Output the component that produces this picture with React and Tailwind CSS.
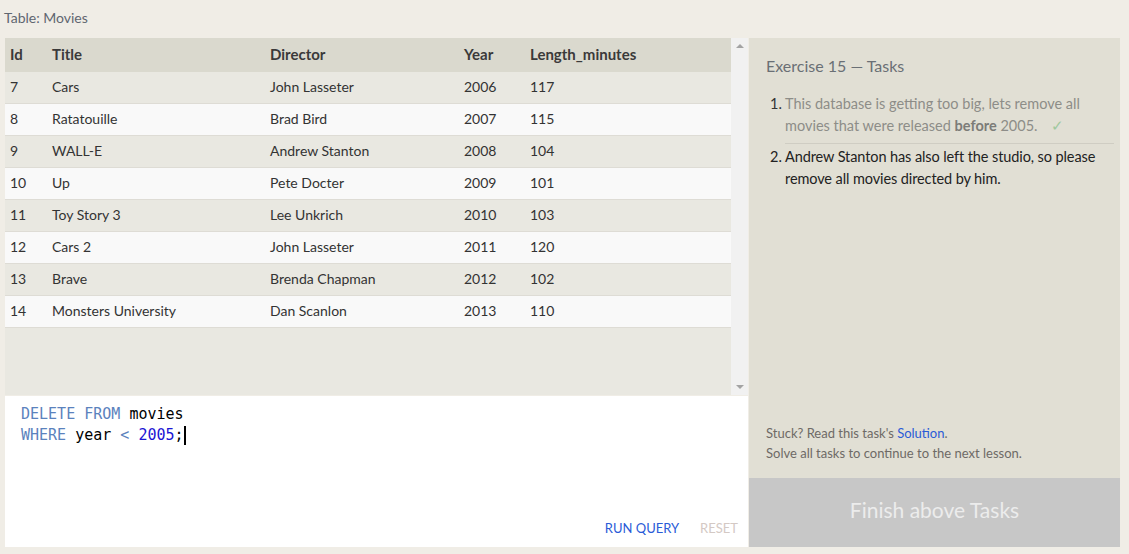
const movies = [
  [7, "Cars", "John Lasseter", 2006, 117],
  [8, "Ratatouille", "Brad Bird", 2007, 115],
  [9, "WALL-E", "Andrew Stanton", 2008, 104],
  [10, "Up", "Pete Docter", 2009, 101],
  [11, "Toy Story 3", "Lee Unkrich", 2010, 103],
  [12, "Cars 2", "John Lasseter", 2011, 120],
  [13, "Brave", "Brenda Chapman", 2012, 102],
  [14, "Monsters University", "Dan Scanlon", 2013, 110],
];

const cols = "grid grid-cols-[42px_218px_194px_66px_1fr]";

export default function App() {
  return (
    <div
      className="h-[554px] w-[1129px] bg-[#f0ede6] text-[#333] overflow-hidden"
      style={{ fontFamily: "Lato, 'Open Sans', sans-serif" }}
    >
      <div className="h-[38px] px-[4px] pt-[7px] text-[14px] text-[#5f6670]">
        Table: Movies
      </div>
      <div className="flex ml-[5px] w-[1115px] h-[509px]">
        <div className="w-[743px] flex flex-col">
          <div className="h-[357px] flex bg-[#e9e8e1]">
            <div className="flex-1 text-[14px]">
              <div className={cols + " h-[34px] items-center bg-[#dad9ce] font-bold text-[15px] text-[#3a3a3a] pl-[5px] pb-[2px]"}>
                <div>Id</div>
                <div>Title</div>
                <div>Director</div>
                <div>Year</div>
                <div>Length_minutes</div>
              </div>
              {movies.map((m, i) => (
                <div
                  key={m[0]}
                  className={
                    cols +
                    " h-[32px] items-center pl-[5px] pb-[2px] border-b border-[#dedcd5] " +
                    (i % 2 === 0 ? "bg-[#e9e8e1]" : "bg-[#f9f9f9]")
                  }
                >
                  {m.map((v, j) => (
                    <div key={j}>{v}</div>
                  ))}
                </div>
              ))}
            </div>
            <div className="w-[17px] bg-[#f1f1f1] flex flex-col justify-between items-center py-[6px]">
              <div className="w-0 h-0 border-x-[4px] border-x-transparent border-b-[4px] border-b-[#a3a3a3]" />
              <div className="w-0 h-0 border-x-[4px] border-x-transparent border-t-[4px] border-t-[#a3a3a3]" />
            </div>
          </div>
          <div className="flex-1 bg-white mt-[1px] flex flex-col">
            <div
              className="flex-1 px-[16px] pt-[8px] text-[15px] leading-[21px]"
              style={{ fontFamily: "'DejaVu Sans Mono', monospace" }}
            >
              <div>
                <span className="text-[#5b82bd]">DELETE FROM</span>{" "}
                <span className="text-black">movies</span>
              </div>
              <div className="flex items-center">
                <span className="text-[#5b82bd]">WHERE</span>
                <span className="text-black">&nbsp;year&nbsp;</span>
                <span className="text-[#5b82bd]">&lt;</span>
                <span className="text-[#1c15d4]">&nbsp;2005</span>
                <span className="text-black">;</span>
                <span className="w-[2px] h-[19px] bg-black" />
              </div>
            </div>
            <div className="h-[36px] flex justify-end items-center gap-[21px] pr-[10px] text-[13px]">
              <span className="text-[#2a5bd7]">RUN QUERY</span>
              <span className="text-[#d4c9c4]">RESET</span>
            </div>
          </div>
        </div>
        <div className="ml-[1px] flex-1 flex flex-col">
          <div className="flex-1 bg-[#e1dfd4] pl-[17px] pr-[6px] pt-[16px] flex flex-col">
            <div className="text-[16px] text-[#6a6f75]">Exercise 15 — Tasks</div>
            <ol className="mt-[15px] text-[14.5px] leading-[22px] pl-[4px]">
              <li className="flex text-[#8d8d88] pb-[2px]">
                <span className="text-[#333] w-[15px] shrink-0">1.</span>
                <span className="border-b border-[#cfcdc3] pb-[6px] flex-1 pr-[4px]">
                  This database is getting too big, lets remove all movies that were released{" "}
                  <b className="text-[#7c7c78]">before</b> 2005.
                  <span className="text-[#9ec89e] ml-[14px]">✓</span>
                </span>
              </li>
              <li className="flex text-[#222]">
                <span className="w-[15px] shrink-0">2.</span>
                <span className="tracking-[-0.1px]">Andrew Stanton has also left the studio, so please remove all movies directed by him.</span>
              </li>
            </ol>
            <div className="mt-auto mb-[15px] text-[13px] leading-[20px] text-[#6e6a66]">
              <div>
                Stuck? Read this task's <span className="text-[#2a5bd7]">Solution</span>.
              </div>
              <div>Solve all tasks to continue to the next lesson.</div>
            </div>
          </div>
          <div className="h-[69px] bg-[#c7c7c7] flex items-center justify-center pb-[6px] text-[21px] text-[#ececec]">
            Finish above Tasks
          </div>
        </div>
      </div>
    </div>
  );
}
